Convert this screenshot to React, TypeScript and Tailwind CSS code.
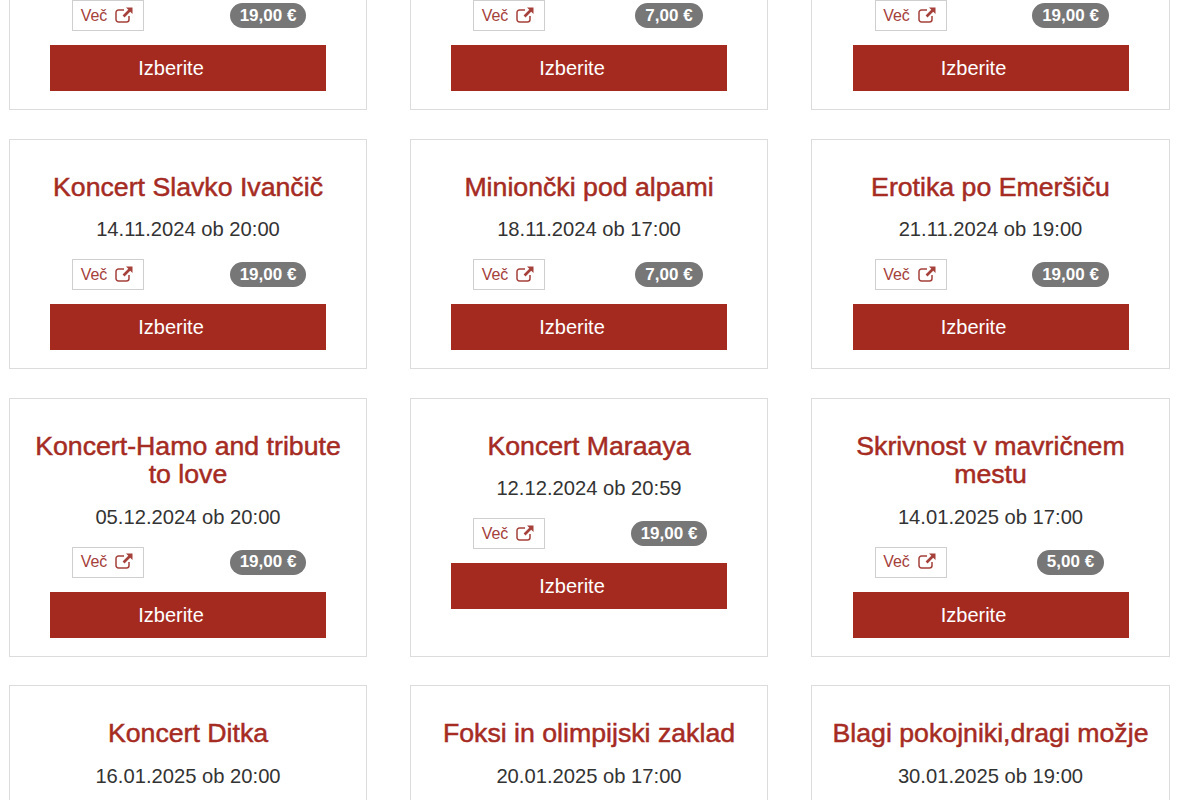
const events: { title: string; date: string; price: string }[] = [
  { title: "Koncert", date: "01.11.2024 ob 20:00", price: "19,00 €" },
  { title: "Predstava", date: "05.11.2024 ob 17:00", price: "7,00 €" },
  { title: "Komedija", date: "08.11.2024 ob 19:00", price: "19,00 €" },
  { title: "Koncert Slavko Ivančič", date: "14.11.2024 ob 20:00", price: "19,00 €" },
  { title: "Miniončki pod alpami", date: "18.11.2024 ob 17:00", price: "7,00 €" },
  { title: "Erotika po Emeršiču", date: "21.11.2024 ob 19:00", price: "19,00 €" },
  { title: "Koncert-Hamo and tribute to love", date: "05.12.2024 ob 20:00", price: "19,00 €" },
  { title: "Koncert Maraaya", date: "12.12.2024 ob 20:59", price: "19,00 €" },
  { title: "Skrivnost v mavričnem mestu", date: "14.01.2025 ob 17:00", price: "5,00 €" },
  { title: "Koncert Ditka", date: "16.01.2025 ob 20:00", price: "19,00 €" },
  { title: "Foksi in olimpijski zaklad", date: "20.01.2025 ob 17:00", price: "7,00 €" },
  { title: "Blagi pokojniki,dragi možje", date: "30.01.2025 ob 19:00", price: "19,00 €" },
];

function ExternalIcon() {
  return (
    <svg width="18" height="16" viewBox="0 0 18 16" fill="none" className="ml-[8px] shrink-0 -translate-y-[1px]">
      <path d="M14 9v3.500a2.500 2.500 0 0 1-2.500 2.500H3.500A2.500 2.500 0 0 1 1 12.500V5.500A2.500 2.500 0 0 1 3.500 3H9" stroke="currentColor" strokeWidth="1.500" />
      <path d="M11 0.500h6.500V7l-2.300-2.300-5.700 5.700-1.900-1.900 5.700-5.700z" fill="currentColor" />
    </svg>
  );
}

function Card({ title, date, price }: { title: string; date: string; price: string }) {
  return (
    <div className="flex flex-col items-center border border-[#dcdcdc] bg-white pt-[33px] pb-[18px]">
      <h3 className="w-full px-[16px] text-center text-[26.7px] leading-[28.5px] text-[#a52b23] [-webkit-text-stroke:0.5px_#a52b23]">
        {title}
      </h3>
      <p className="mt-[14px] text-[20.2px] leading-[28px] text-[#333333]">{date}</p>
      <div className="mt-[16px] grid w-[320px] grid-cols-2 items-center">
        <div className="flex justify-center">
          <a className="flex h-[31px] w-[72px] items-center justify-center border border-[#cfcfcf] pr-[2px] text-[16px] text-[#a5403a]">
            Več
            <ExternalIcon />
          </a>
        </div>
        <div className="flex justify-center">
          <span className="flex h-[25px] items-center rounded-full bg-[#777777] px-[10px] text-[17px] font-bold text-white">
            {price}
          </span>
        </div>
      </div>
      <button className="mt-[14px] h-[46px] w-[276px] bg-[#a42a20] pr-[34px] text-[20px] text-white">Izberite</button>
    </div>
  );
}

export default function App() {
  return (
    <div className="h-[800px] overflow-hidden bg-white font-['Liberation_Sans',Arial,sans-serif]">
      <div className="ml-[9px] mt-[-120.5px] grid grid-cols-[358px_358px_359px] gap-x-[43px] gap-y-[28.5px]">
        {events.map((e) => (
          <Card key={e.title} {...e} />
        ))}
      </div>
    </div>
  );
}
